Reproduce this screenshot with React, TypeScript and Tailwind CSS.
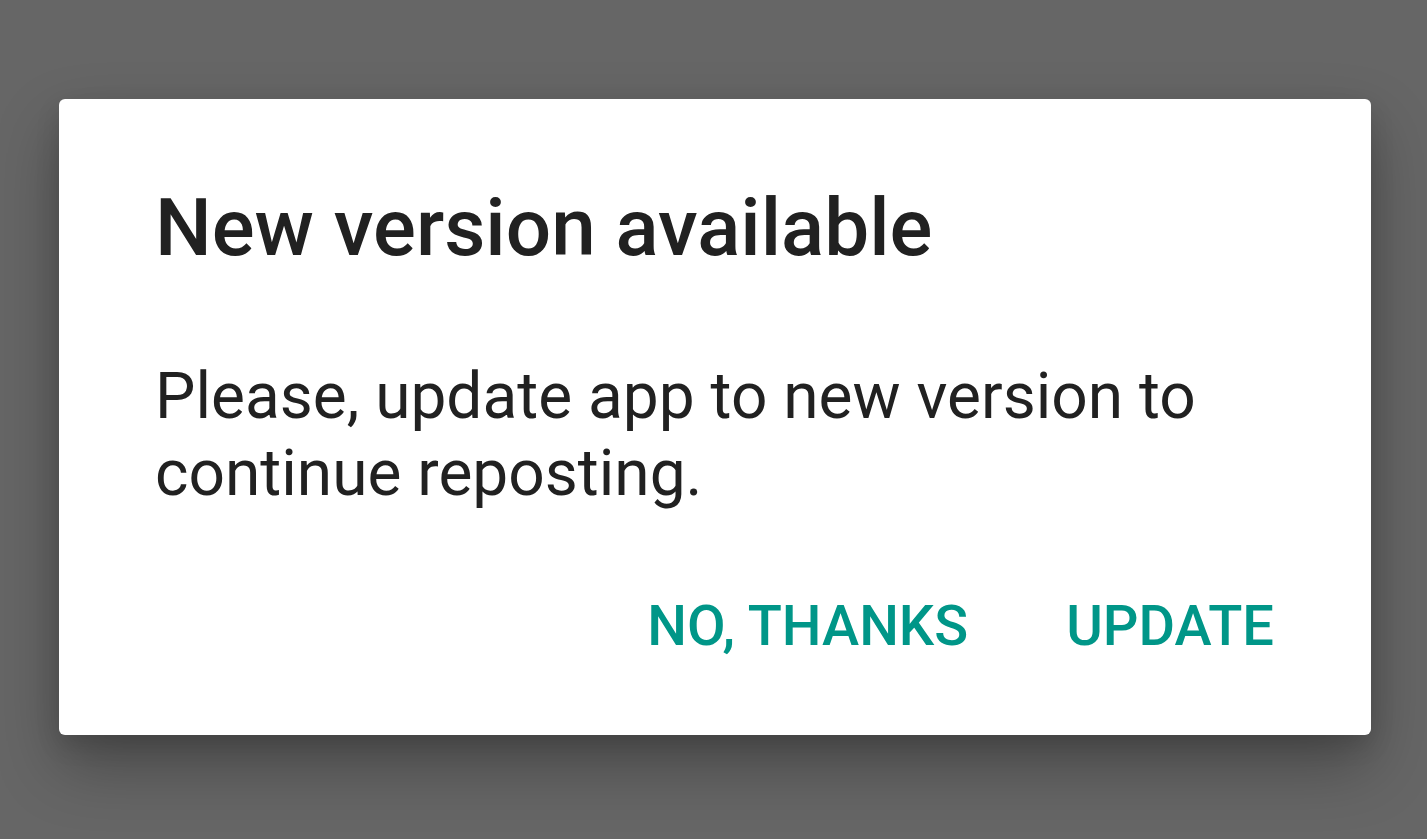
import React from 'react';

const App: React.FC = () => {
    return (
        <div className="w-full h-[839px] bg-[#666666] pt-[99px] pl-[59px] pr-[56px] font-['Roboto',sans-serif] overflow-hidden">
            <div className="w-[1312px] h-[636px] bg-white rounded-[6px] shadow-[0_30px_64px_rgba(0,0,0,0.3),0_10px_24px_rgba(0,0,0,0.12)] pt-[84px] pl-[96px] pr-[97px] flex flex-col">
                <h1 className="text-[80px] leading-[90px] font-medium text-[#212121]">New version available</h1>
                <p className="mt-[85px] text-[64px] leading-[77px] text-[#212121]">
                    Please, update app to new version to
                    <br />
                    continue reposting.
                </p>
                <div className="mt-[82px] flex justify-end gap-[98px]">
                    <button className="text-[56px] leading-[64px] font-medium text-[#009688]">NO, THANKS</button>
                    <button className="text-[56px] leading-[64px] font-medium text-[#009688]">UPDATE</button>
                </div>
            </div>
        </div>
    );
};

export default App;
